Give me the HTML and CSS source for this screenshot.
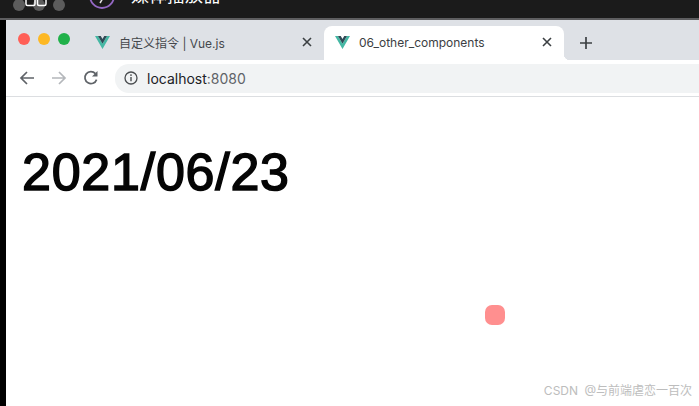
FILE: index.html
```html
<!DOCTYPE html>
<html lang="zh-CN">
<head>
  <meta charset="UTF-8" />
  <meta name="viewport" content="width=device-width, initial-scale=1.0" />
  <title>06_other_components</title>
  <link rel="stylesheet" href="styles.css">
</head>
<body>

  <svg class="sprites" width="0" height="0">
    <symbol id="vue-logo" viewBox="0 0 256 221">
      <path fill="#45b8a4" d="M0 0l128 220.8L256 0h-51.2L128 132.48 50.56 0H0Z"/>
      <path fill="#2f4a56" d="M50.56 0L128 133.12 204.8 0h-47.36L128 51.2 97.92 0H50.56Z"/>
    </symbol>
    <symbol id="close-icon" viewBox="0 0 12 12">
      <path d="M2 2l8 8M10 2l-8 8" fill="none" stroke="#3c4043" stroke-width="1.6"/>
    </symbol>
  </svg>

  <!-- system bar, cut off by the top of the capture -->
  <section class="system-bar">
    <svg class="system-icons" width="120" height="18" viewBox="0 0 120 18">
      <circle cx="19" cy="5" r="6" fill="#5c5c5c"/>
      <circle cx="39" cy="5" r="6" fill="#5c5c5c"/>
      <circle cx="59" cy="5" r="6" fill="#5c5c5c"/>
      <rect x="26" y="-6" width="9" height="11.5" rx="1.5" fill="none" stroke="#fff" stroke-width="1.5"/>
      <rect x="37.5" y="-6" width="8.5" height="11.5" rx="1.5" fill="none" stroke="#fff" stroke-width="1.5"/>
      <circle cx="102" cy="-4" r="12" fill="none" stroke="#9468c4" stroke-width="1.8"/>
      <path d="M103 -2l-3 5" fill="none" stroke="#e4e4e4" stroke-width="1.5"/>
    </svg>
    <span class="player-name">媒体播放器</span>
  </section>

  <section class="desktop">
    <div class="left-edge"></div>

    <div class="browser">
      <div class="tab-strip">
        <div class="traffic-lights">
          <span class="light light-red"></span>
          <span class="light light-yellow"></span>
          <span class="light light-green"></span>
        </div>

        <div class="tab">
          <svg class="favicon"><use href="#vue-logo"/></svg>
          <span class="tab-title">自定义指令 | Vue.js</span>
          <svg class="tab-close"><use href="#close-icon"/></svg>
        </div>

        <div class="tab tab-active">
          <svg class="favicon"><use href="#vue-logo"/></svg>
          <span class="tab-title">06_other_components</span>
          <svg class="tab-close"><use href="#close-icon"/></svg>
        </div>

        <svg class="new-tab" width="14" height="14" viewBox="0 0 14 14">
          <path d="M7 1v12M1 7h12" fill="none" stroke="#3c4043" stroke-width="1.7"/>
        </svg>
      </div>

      <div class="toolbar">
        <div class="nav-buttons">
          <svg width="16" height="16" viewBox="0 0 16 16">
            <path d="M15 8H2M8 2L2 8l6 6" fill="none" stroke="#5f6368" stroke-width="1.7"/>
          </svg>
          <svg width="16" height="16" viewBox="0 0 16 16">
            <path d="M1 8h13M8 2l6 6-6 6" fill="none" stroke="#b4b7bb" stroke-width="1.7"/>
          </svg>
          <svg width="16" height="16" viewBox="0 0 16 16">
            <path d="M13.6 9.6A6 6 0 1 1 12.4 3.6" fill="none" stroke="#5f6368" stroke-width="1.7"/>
            <path d="M14.5 1v5.5H9z" fill="#5f6368"/>
          </svg>
        </div>

        <div class="address-bar">
          <svg width="14" height="14" viewBox="0 0 14 14">
            <circle cx="7" cy="7" r="6" fill="none" stroke="#4a4d50" stroke-width="1.3"/>
            <path d="M7 6v4.2" fill="none" stroke="#4a4d50" stroke-width="1.4"/>
            <circle cx="7" cy="4.1" r=".9" fill="#4a4d50"/>
          </svg>
          <span class="url">localhost<span class="url-port">:8080</span></span>
        </div>
      </div>

      <div class="page">
        <h1 class="date">2021/06/23</h1>
        <div class="red-box"></div>
        <span class="watermark">CSDN @与前端虐恋一百次</span>
      </div>
    </div>
  </section>

</body>
</html>
```

FILE: styles.css
```css
* {
  box-sizing: border-box;
  font-family: "Inter", "Noto Sans CJK SC", sans-serif;
}

html,
body {
  height: 100%;
}

body {
  margin: 0;
  display: flex;
  flex-direction: column;
  overflow: hidden;
  background: #fff;
}

.sprites {
  display: none;
}

.system-bar {
  flex: none;
  display: flex;
  height: 20px;
  overflow: hidden;
  background: #1b1b1b;
  border-bottom: 2px solid #5e5e60;
}

.system-icons {
  flex: none;
}

.player-name {
  margin: -17px 0 0 11px;
  font-size: 18px;
  line-height: 26px;
  color: #fff;
}

.desktop {
  flex: 1;
  display: flex;
  min-height: 0;
}

.left-edge {
  flex: none;
  width: 6px;
  background: #000;
}

.browser {
  flex: 1;
  display: flex;
  flex-direction: column;
  min-width: 0;
}

.tab-strip {
  flex: none;
  display: flex;
  align-items: flex-end;
  height: 40px;
  background: #dee1e6;
}

.traffic-lights {
  display: flex;
  gap: 8px;
  align-self: center;
  width: 78px;
  padding: 0 0 2px 12px;
}

.light {
  width: 12px;
  height: 12px;
  border-radius: 50%;
}

.light-red {
  background: #ff5f57;
}

.light-yellow {
  background: #fdb824;
}

.light-green {
  background: #20b14a;
}

.tab {
  display: flex;
  align-items: center;
  width: 240px;
  height: 34px;
  padding: 0 11px 2px 11px;
  border-radius: 8px 8px 0 0;
  font-size: 12px;
  color: #45484c;
}

.tab-active {
  position: relative;
  background: #fff;
  color: #3c4043;
}

/* small flare where the active tab meets the toolbar */
.tab-active::after {
  content: "";
  position: absolute;
  right: -6px;
  bottom: 0;
  width: 6px;
  height: 6px;
  background: radial-gradient(circle at 100% 0, transparent 6px, #fff 6.5px);
}

.favicon {
  flex: none;
  width: 15px;
  height: 13px;
  margin-right: 9px;
}

.tab-title {
  flex: 1;
  white-space: nowrap;
}

.tab-close {
  flex: none;
  width: 12px;
  height: 12px;
}

.new-tab {
  align-self: center;
  margin: 0 0 -6px 15px;
}

.toolbar {
  flex: none;
  display: flex;
  align-items: center;
  height: 37px;
  padding-left: 13px;
  background: #fff;
  border-bottom: 1px solid #dcdee1;
}

.nav-buttons {
  display: flex;
  gap: 16px;
  width: 96px;
}

.address-bar {
  flex: 1;
  display: flex;
  align-items: center;
  gap: 9px;
  height: 29px;
  padding-left: 9px;
  border-radius: 14px 0 0 14px;
  background: #f1f3f4;
}

.url {
  font-size: 14px;
  color: #202124;
}

.url-port {
  color: #5f6368;
}

.page {
  flex: 1;
  position: relative;
  padding: 45px 16px;
  background: #fff;
}

.date {
  margin: 0;
  font-family: "Liberation Sans", Arial, sans-serif;
  font-size: 52px;
  line-height: 61px;
  font-weight: normal;
  letter-spacing: 0.75px;
  -webkit-text-stroke: 1.5px #050505;
  color: #050505;
}

.red-box {
  position: absolute;
  left: 479px;
  top: 208px;
  width: 20px;
  height: 20px;
  border-radius: 7px;
  background: #ff8f8f;
}

.watermark {
  position: absolute;
  right: 7px;
  bottom: 7px;
  font-size: 12px;
  line-height: 16px;
  word-spacing: 3px;
  color: #bdbdbd;
}
```
